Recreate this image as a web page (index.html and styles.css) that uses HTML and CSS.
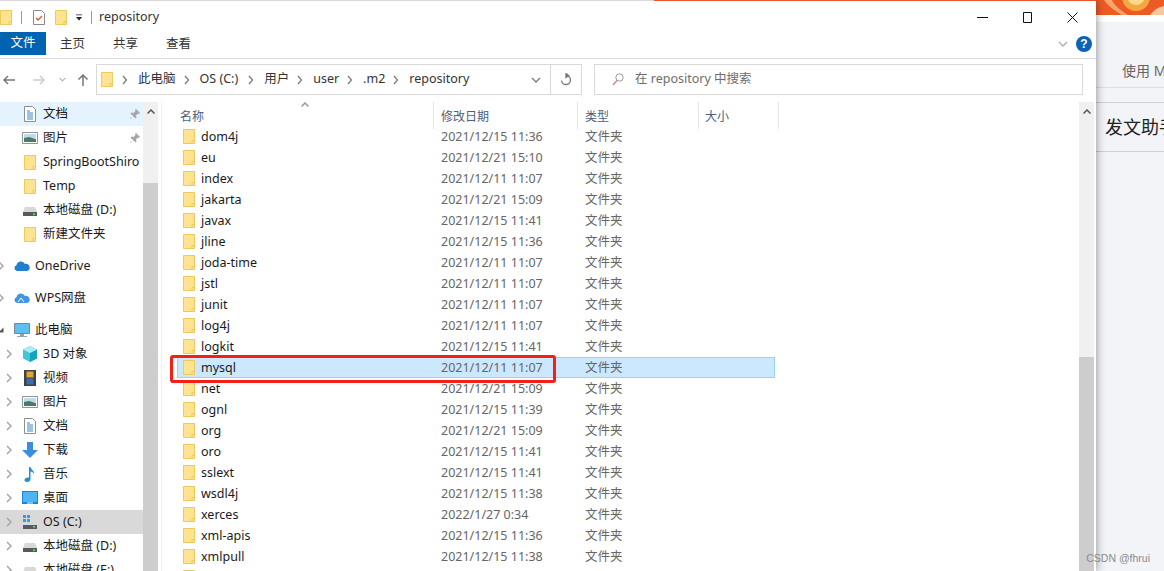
FILE: index.html
```html
<!DOCTYPE html>
<html lang="zh-CN">
<head>
<meta charset="UTF-8">
<title>repository</title>
<link rel="stylesheet" href="styles.css">
</head>
<body>
<svg class="defs" width="0" height="0">
	<symbol id="folder" viewBox="0 0 12 15">
		<path d="M.5.5h11v14H.5z" fill="#ffe391" stroke="#eec95c"/>
		<path d="M9 14.5v-3h2.5" fill="none" stroke="#eec95c"/>
	</symbol>
	<symbol id="doc" viewBox="0 0 16 16">
		<path d="M2.5.5h8l3 3v12h-11z" fill="#fff" stroke="#8a8f94"/>
		<path d="M5 5h3M5 7h6M5 9h6M5 11h6M5 13h6" stroke="#3a84c8"/>
	</symbol>
	<symbol id="pic" viewBox="0 0 16 16">
		<path d="M.5 2.5h15v11H.5z" fill="#fff" stroke="#8f9498"/>
		<path d="M2 4h12v4H2z" fill="#bfdcec"/>
		<path d="M2 8l5-1 7 2v3H2z" fill="#4d7a68"/>
	</symbol>
	<symbol id="drive" viewBox="0 0 16 16">
		<path d="M3 5h10l2 5H1z" fill="#d8d8d8"/>
		<path d="M1 10h14v4H1z" fill="#555b60"/>
		<path d="M11 11.500h2v1.500h-2z" fill="#5fe06c"/>
	</symbol>
	<symbol id="cloud" viewBox="0 0 16 16">
		<path d="M3 13a3 3 0 0 1-.5-5.800A4.500 4.500 0 0 1 11 6a3.500 3.500 0 0 1 2 7z" fill="#1f7fd0"/>
	</symbol>
	<symbol id="wps" viewBox="0 0 16 16">
		<path d="M3 13a3 3 0 0 1-.5-5.800A4.500 4.500 0 0 1 11 6a3.500 3.500 0 0 1 2 7z" fill="#3f95e6"/>
		<path d="M4 12l3-4 3 4" fill="none" stroke="#fff"/>
	</symbol>
	<symbol id="pc" viewBox="0 0 16 16">
		<path d="M.5 1.500h15v10H.5z" fill="#5cc0f0" stroke="#7b8794"/>
		<path d="M6 12h4v2H6zM3 14h10v1H3z" fill="#9aa4ad"/>
	</symbol>
	<symbol id="cube" viewBox="0 0 16 16">
		<path d="M8 0l7 3.500v9L8 16l-7-3.500v-9z" fill="#3fc6d8"/>
		<path d="M8 7l7-3.500v9L8 16z" fill="#17a3bc"/>
		<path d="M8 0l7 3.500L8 7 1 3.500z" fill="#a6ecf2"/>
	</symbol>
	<symbol id="film" viewBox="0 0 16 16">
		<path d="M2 0h12v16H2z" fill="#3e4348"/>
		<path d="M4.500 1.500h7v6h-7z" fill="#e0a52e"/>
		<path d="M4.500 8.500h7v6h-7z" fill="#3d6fb0"/>
	</symbol>
	<symbol id="down" viewBox="0 0 16 16">
		<path d="M5 0h6v8h5l-8 8-8-8h5z" fill="#3a8ee0"/>
	</symbol>
	<symbol id="note" viewBox="0 0 16 16">
		<path d="M7 1h1.500c.5 3 4 3.500 3.500 7-.8-1.500-2-2.200-3.500-2.500V13c0 1.800-1.500 3-3.500 3-1.500 0-2.500-.8-2.500-2s1.500-2.500 3.500-2.500H7z" fill="#1e8fe0"/>
	</symbol>
	<symbol id="desk" viewBox="0 0 16 16">
		<path d="M0 1h16v13H0z" fill="#1188e0"/>
		<path d="M1 2h14v10H1z" fill="#4fb4f2"/>
		<path d="M5 12.500h6v1H5z" fill="#e8f4fc"/>
	</symbol>
	<symbol id="osdrive" viewBox="0 0 16 16">
		<path d="M1 1h3v3H1zM5 1h3v3H5zM1 5h3v3H1zM5 5h3v3H5z" fill="#1ca6ee"/>
		<path d="M3 8h10l2 3H1z" fill="#d8d8d8"/>
		<path d="M1 11h14v4H1z" fill="#555b60"/>
		<path d="M11 12h2v1.500h-2z" fill="#5fe06c"/>
	</symbol>
	<symbol id="pin" viewBox="0 0 10 10">
		<path d="M6 0l4 4-1 1-1-.5-2 2 .5 2-1 1L3 7 .5 10 0 9.500 3 7 .5 4.500l1-1 2 .5 2-2L5 1z" fill="#a4a8ac"/>
	</symbol>
	<symbol id="chev" viewBox="0 0 6 10">
		<path d="M1 1l4 4-4 4" fill="none" stroke="#a6a6a6" stroke-width="1.500"/>
	</symbol>
	<symbol id="sep" viewBox="0 0 6 10">
		<path d="M1 1l3.500 4L1 9" fill="none" stroke="#7c7c7c" stroke-width="1.300"/>
	</symbol>
	<symbol id="vee" viewBox="0 0 10 6">
		<path d="M1 1l4 4 4-4" fill="none" stroke="#7a7a7a" stroke-width="1.300"/>
	</symbol>
	<symbol id="caret" viewBox="0 0 8 5">
		<path d="M.5 4.500L4 1l3.500 3.500" fill="none" stroke="#555" stroke-width="1.500"/>
	</symbol>
</svg>

<section class="window">
	<div class="topLine"></div>

	<header class="titleBar">
		<svg class="titleFolder"><use href="#folder"/></svg>
		<i class="titleSep"></i>
		<svg class="titleCheck" viewBox="0 0 12 15">
			<path d="M.5.5h8l3 3v11H.500z" fill="#fff" stroke="#8a8a8a"/>
			<path d="M3 8l2 2 4-4" fill="none" stroke="#e0562a" stroke-width="1.300"/>
		</svg>
		<svg class="titleFolder2"><use href="#folder"/></svg>
		<svg class="titleDrop" viewBox="0 0 8 7"><path d="M0 0h7v1H0zM0 3h7L3.500 7z" fill="#222"/></svg>
		<i class="titleSep2"></i>
		<span class="titleText">repository</span>
		<div class="winBtns">
			<svg viewBox="0 0 11 11"><path d="M0 5.500h11" stroke="#111"/></svg>
			<svg viewBox="0 0 11 11"><path d="M1.500.5h8v10h-8z" fill="none" stroke="#111"/></svg>
			<svg viewBox="0 0 11 11"><path d="M.5.5l10 10M10.500.5l-10 10" stroke="#111"/></svg>
		</div>
	</header>

	<nav class="ribbon">
		<a class="fileTab">文件</a>
		<a class="tab">主页</a>
		<a class="tab">共享</a>
		<a class="tab">查看</a>
		<svg class="ribbonVee"><use href="#vee"/></svg>
		<span class="help">?</span>
	</nav>

	<div class="addressRow">
		<div class="navBtns">
			<svg viewBox="0 0 12 10"><path d="M12 5H1M5 1L1 5l4 4" fill="none" stroke="#777" stroke-width="1.500"/></svg>
			<svg class="off" viewBox="0 0 12 10"><path d="M0 5h11M7 1l4 4-4 4" fill="none" stroke="#ccc" stroke-width="1.500"/></svg>
			<svg class="small"><use href="#vee"/></svg>
			<svg viewBox="0 0 12 12"><path d="M6 12V1M1.500 5.500L6 1l4.500 4.500" fill="none" stroke="#777" stroke-width="1.500"/></svg>
		</div>
		<div class="address">
			<svg class="crumbFolder"><use href="#folder"/></svg>
			<svg class="crumbSep"><use href="#sep"/></svg><span>此电脑</span>
			<svg class="crumbSep"><use href="#sep"/></svg><span class="crumbDrive">OS (C:)</span>
			<svg class="crumbSep"><use href="#sep"/></svg><span>用户</span>
			<svg class="crumbSep"><use href="#sep"/></svg><span>user</span>
			<svg class="crumbSep"><use href="#sep"/></svg><span>.m2</span>
			<svg class="crumbSep"><use href="#sep"/></svg><span>repository</span>
			<svg class="addressVee"><use href="#vee"/></svg>
			<div class="refresh">
				<svg viewBox="0 0 12 14"><path d="M6 2.500a4.500 4.500 0 1 1-4.500 5M6 .5v4l2.500-2z" fill="none" stroke="#777" stroke-width="1.300"/></svg>
			</div>
		</div>
		<div class="search">
			<svg viewBox="0 0 12 13"><circle cx="7.500" cy="4.500" r="3.700" fill="none" stroke="#999"/><path d="M5 7.500L1 12" stroke="#b08a90" stroke-width="1.200"/></svg>
			<span>在 repository 中搜索</span>
		</div>
	</div>

	<div class="main">
		<aside class="tree">
			<ul class="treeList">
				<li class="quick on"><svg class="ico"><use href="#doc"/></svg><span>文档</span><svg class="pin"><use href="#pin"/></svg></li>
				<li class="quick"><svg class="ico"><use href="#pic"/></svg><span>图片</span><svg class="pin"><use href="#pin"/></svg></li>
				<li class="quick"><svg class="ico fold"><use href="#folder"/></svg><span>SpringBootShiro</span></li>
				<li class="quick"><svg class="ico fold"><use href="#folder"/></svg><span>Temp</span></li>
				<li class="quick"><svg class="ico"><use href="#drive"/></svg><span>本地磁盘 (D:)</span></li>
				<li class="quick groupEnd"><svg class="ico fold"><use href="#folder"/></svg><span>新建文件夹</span></li>
				<li class="root groupEnd"><svg class="arrow"><use href="#chev"/></svg><svg class="ico"><use href="#cloud"/></svg><span>OneDrive</span></li>
				<li class="root groupEnd"><svg class="arrow"><use href="#chev"/></svg><svg class="ico"><use href="#wps"/></svg><span>WPS网盘</span></li>
				<li class="root"><svg class="arrow open" viewBox="0 0 6 6"><path d="M5.500.5v5h-5z" fill="#555"/></svg><svg class="ico"><use href="#pc"/></svg><span>此电脑</span></li>
				<li class="child"><svg class="arrow"><use href="#chev"/></svg><svg class="ico"><use href="#cube"/></svg><span>3D 对象</span></li>
				<li class="child"><svg class="arrow"><use href="#chev"/></svg><svg class="ico"><use href="#film"/></svg><span>视频</span></li>
				<li class="child"><svg class="arrow"><use href="#chev"/></svg><svg class="ico"><use href="#pic"/></svg><span>图片</span></li>
				<li class="child"><svg class="arrow"><use href="#chev"/></svg><svg class="ico"><use href="#doc"/></svg><span>文档</span></li>
				<li class="child"><svg class="arrow"><use href="#chev"/></svg><svg class="ico"><use href="#down"/></svg><span>下载</span></li>
				<li class="child"><svg class="arrow"><use href="#chev"/></svg><svg class="ico"><use href="#note"/></svg><span>音乐</span></li>
				<li class="child"><svg class="arrow"><use href="#chev"/></svg><svg class="ico"><use href="#desk"/></svg><span>桌面</span></li>
				<li class="child cur"><svg class="arrow"><use href="#chev"/></svg><svg class="ico"><use href="#osdrive"/></svg><span>OS (C:)</span></li>
				<li class="child"><svg class="arrow"><use href="#chev"/></svg><svg class="ico"><use href="#drive"/></svg><span>本地磁盘 (D:)</span></li>
				<li class="child"><svg class="arrow"><use href="#chev"/></svg><svg class="ico"><use href="#drive"/></svg><span>本地磁盘 (E:)</span></li>
			</ul>
			<div class="scroll treeScroll"><svg class="up"><use href="#caret"/></svg><div class="thumb"></div></div>
		</aside>

		<div class="files">
			<div class="head">
				<span class="colName">名称<svg class="sort"><use href="#caret"/></svg></span>
				<span class="colDate">修改日期</span>
				<span class="colType">类型</span>
				<span class="colSize">大小</span>
			</div>
			<ul class="rows">
				<li><span class="colName"><svg><use href="#folder"/></svg>dom4j</span><span class="colDate">2021/12/15 11:36</span><span class="colType">文件夹</span></li>
				<li><span class="colName"><svg><use href="#folder"/></svg>eu</span><span class="colDate">2021/12/21 15:10</span><span class="colType">文件夹</span></li>
				<li><span class="colName"><svg><use href="#folder"/></svg>index</span><span class="colDate">2021/12/11 11:07</span><span class="colType">文件夹</span></li>
				<li><span class="colName"><svg><use href="#folder"/></svg>jakarta</span><span class="colDate">2021/12/21 15:09</span><span class="colType">文件夹</span></li>
				<li><span class="colName"><svg><use href="#folder"/></svg>javax</span><span class="colDate">2021/12/15 11:41</span><span class="colType">文件夹</span></li>
				<li><span class="colName"><svg><use href="#folder"/></svg>jline</span><span class="colDate">2021/12/15 11:36</span><span class="colType">文件夹</span></li>
				<li><span class="colName"><svg><use href="#folder"/></svg>joda-time</span><span class="colDate">2021/12/11 11:07</span><span class="colType">文件夹</span></li>
				<li><span class="colName"><svg><use href="#folder"/></svg>jstl</span><span class="colDate">2021/12/11 11:07</span><span class="colType">文件夹</span></li>
				<li><span class="colName"><svg><use href="#folder"/></svg>junit</span><span class="colDate">2021/12/11 11:07</span><span class="colType">文件夹</span></li>
				<li><span class="colName"><svg><use href="#folder"/></svg>log4j</span><span class="colDate">2021/12/11 11:07</span><span class="colType">文件夹</span></li>
				<li><span class="colName"><svg><use href="#folder"/></svg>logkit</span><span class="colDate">2021/12/15 11:41</span><span class="colType">文件夹</span></li>
				<li class="selected"><span class="colName"><svg><use href="#folder"/></svg>mysql</span><span class="colDate">2021/12/11 11:07</span><span class="colType">文件夹</span></li>
				<li><span class="colName"><svg><use href="#folder"/></svg>net</span><span class="colDate">2021/12/21 15:09</span><span class="colType">文件夹</span></li>
				<li><span class="colName"><svg><use href="#folder"/></svg>ognl</span><span class="colDate">2021/12/15 11:39</span><span class="colType">文件夹</span></li>
				<li><span class="colName"><svg><use href="#folder"/></svg>org</span><span class="colDate">2021/12/21 15:09</span><span class="colType">文件夹</span></li>
				<li><span class="colName"><svg><use href="#folder"/></svg>oro</span><span class="colDate">2021/12/15 11:41</span><span class="colType">文件夹</span></li>
				<li><span class="colName"><svg><use href="#folder"/></svg>sslext</span><span class="colDate">2021/12/15 11:41</span><span class="colType">文件夹</span></li>
				<li><span class="colName"><svg><use href="#folder"/></svg>wsdl4j</span><span class="colDate">2021/12/15 11:38</span><span class="colType">文件夹</span></li>
				<li><span class="colName"><svg><use href="#folder"/></svg>xerces</span><span class="colDate">2022/1/27 0:34</span><span class="colType">文件夹</span></li>
				<li><span class="colName"><svg><use href="#folder"/></svg>xml-apis</span><span class="colDate">2021/12/15 11:36</span><span class="colType">文件夹</span></li>
				<li><span class="colName"><svg><use href="#folder"/></svg>xmlpull</span><span class="colDate">2021/12/15 11:38</span><span class="colType">文件夹</span></li>
				<li><span class="colName"><svg><use href="#folder"/></svg></span></li>
			</ul>
			<div class="redBox"></div>
		</div>

		<div class="scroll fileScroll"><svg class="up"><use href="#caret"/></svg><div class="thumb"></div></div>
	</div>
</section>

<aside class="side">
	<div class="banner">
		<svg viewBox="0 0 68 15" preserveAspectRatio="none">
			<path d="M0 0h68v15H0z" fill="#ee5a24"/>
			<path d="M8 0c4 6 10 10 18 15h6C24 10 18 5 16 0z" fill="#f7a56a"/>
			<circle cx="40" cy="-3" r="14" fill="#f5a742"/>
			<circle cx="40" cy="-4" r="9" fill="#fcd98c"/>
			<path d="M54 15c4-5 8-8 14-9v9z" fill="#f9c79a"/>
		</svg>
	</div>
	<div class="useRow">使用 M</div>
	<div class="helper">发文助手</div>
</aside>

<div class="mark">CSDN @fhrui</div>
</body>
</html>
```

FILE: styles.css
```css
* {
	box-sizing: border-box;
}
html,
body {
	height: 100%;
}
body {
	display: flex;
	position: relative;
	margin: 0;
	height: 571px;
	overflow: hidden;
	background: #f3f4f7;
	color: #1a1a1a;
	font: 12.5px/1 "Noto Sans", "Noto Sans CJK SC", sans-serif;
}
ul {
	margin: 0;
	padding: 0;
	list-style: none;
}
svg {
	display: block;
	flex: none;
}
.defs {
	position: absolute;
}

.window {
	position: relative;
	z-index: 1;
	display: flex;
	flex-direction: column;
	flex: none;
	width: 1096px;
	height: 571px;
	background: #fff;
	box-shadow: 0 0 9px rgba(0, 0, 0, .45);
}
.topLine {
	flex: none;
	height: 1px;
	background: linear-gradient(to right, #d9d9d9 654px, #e9552a 654px);
}

/* title bar */
.titleBar {
	display: flex;
	flex: none;
	align-items: center;
	height: 32px;
}
.titleFolder,
.titleFolder2 {
	width: 12px;
	height: 15px;
}
.titleSep,
.titleSep2 {
	width: 1px;
	height: 13px;
	margin-left: 9px;
	background: #9a9a9a;
}
.titleCheck {
	width: 12px;
	height: 15px;
	margin-left: 11px;
}
.titleFolder2 {
	margin-left: 10px;
}
.titleDrop {
	width: 7px;
	height: 7px;
	margin-left: 9px;
}
.titleSep2 {
	margin-left: 8px;
}
.titleText {
	margin-left: 7px;
	font-size: 12.5px;
	color: #333;
}
.winBtns {
	display: flex;
	gap: 34px;
	margin-left: auto;
	margin-right: 18px;
}
.winBtns svg {
	width: 11px;
	height: 11px;
}

/* ribbon */
.ribbon {
	display: flex;
	flex: none;
	align-items: center;
	height: 27px;
	margin-top: -1px;
	padding-bottom: 3px;
	border-bottom: 1px solid #dadada;
	white-space: nowrap;
}
.fileTab {
	display: flex;
	align-items: center;
	justify-content: center;
	flex: none;
	width: 46px;
	height: 23px;
	background: #0063b1;
	color: #fff;
}
.tab {
	flex: none;
	width: 24px;
	margin-left: 29px;
	padding-top: 2px;
	color: #333;
}
.fileTab + .tab {
	margin-left: 14px;
}
.ribbonVee {
	width: 10px;
	height: 6px;
	margin-left: auto;
	opacity: .6;
}
.help {
	width: 16px;
	height: 16px;
	margin: 0 4px 0 8px;
	border-radius: 50%;
	background: #0e62b4;
	color: #fff;
	font: bold 12px/16px "Liberation Sans", sans-serif;
	text-align: center;
}

/* address row */
.addressRow {
	display: flex;
	flex: none;
	align-items: center;
	height: 43px;
	padding-right: 13px;
	padding-bottom: 2px;
}
.navBtns {
	display: flex;
	align-items: center;
	width: 96px;
	padding-left: 3px;
}
.navBtns svg {
	width: 12px;
	height: 12px;
	margin-right: 18px;
}
.navBtns .small {
	width: 7px;
	height: 5px;
	margin: 0 11px 0 -4px;
}
.address {
	display: flex;
	align-items: center;
	width: 486px;
	height: 31px;
	padding-left: 4px;
	border: 1px solid #d9d9d9;
	color: #333;
}
.crumbFolder {
	width: 12px;
	height: 15px;
	margin-right: 3px;
}
.crumbSep {
	width: 6px;
	height: 10px;
	margin: 0 10px 0 6px;
}
.address span + .crumbSep {
	margin-left: 8px;
}
.crumbDrive {
	padding-right: 2px;
}
.addressVee {
	width: 10px;
	height: 6px;
	margin-left: auto;
}
.refresh {
	display: flex;
	align-items: center;
	justify-content: center;
	width: 31px;
	height: 100%;
	margin-left: 9px;
	border-left: 1px solid #d9d9d9;
}
.refresh svg {
	width: 12px;
	height: 14px;
}
.search {
	display: flex;
	align-items: center;
	flex: 1;
	height: 31px;
	margin-left: 12px;
	padding-left: 17px;
	border: 1px solid #d9d9d9;
	color: #6d6d6d;
}
.search svg {
	width: 12px;
	height: 13px;
	margin-right: 11px;
}

/* main */
.main {
	display: flex;
	flex: 1;
	min-height: 0;
}
.tree {
	display: flex;
	flex: none;
	width: 162px;
	border-right: 1px solid #f0f0f0;
}
.treeList {
	flex: none;
	width: 143px;
	overflow: hidden;
	color: #1a1a1a;
}
.treeList li {
	display: flex;
	align-items: center;
	height: 24px;
	white-space: nowrap;
}
.treeList .ico {
	width: 16px;
	height: 16px;
	margin-right: 5px;
}
.treeList .fold {
	width: 12px;
	height: 15px;
	margin-left: 2px;
	margin-right: 7px;
}
.treeList .on {
	background: #e5f3ff;
}
.treeList .cur {
	background: #d9d9d9;
}
.quick {
	padding-left: 22px;
}
.treeList .groupEnd {
	margin-bottom: 8px;
}
.root {
	margin-left: -2px;
}
.child {
	padding-left: 6px;
}
.arrow {
	width: 6px;
	height: 10px;
	margin-right: 10px;
}
.arrow.open {
	height: 6px;
}
.pin {
	width: 10px;
	height: 10px;
	margin-left: auto;
	margin-right: 3px;
}

.scroll {
	display: flex;
	flex-direction: column;
	flex: none;
	width: 15px;
	background: #f0f0f0;
}
.up {
	width: 8px;
	height: 5px;
	margin: 7px auto 0;
}
.thumb {
	flex: 1;
	background: #cdcdcd;
}
.treeScroll .thumb {
	margin-top: 69px;
}
.fileScroll {
	margin-right: 2px;
}
.fileScroll .thumb {
	margin-top: 243px;
}

/* file list */
.files {
	position: relative;
	flex: 1;
	min-width: 0;
	padding-left: 15px;
	overflow: hidden;
	color: #666;
}
.head,
.rows li {
	display: flex;
	align-items: center;
	width: 598px;
}
.head {
	width: 602px;
	height: 24px;
	font-size: 12px;
}
.colName {
	display: flex;
	align-items: center;
	position: relative;
	flex: none;
	width: 257px;
	padding-left: 6px;
}
.colDate {
	flex: none;
	width: 144px;
	padding-left: 7px;
}
.colType {
	flex: none;
	width: 121px;
	padding-left: 7px;
}
.colSize {
	flex: none;
	width: 80px;
	padding-left: 6px;
}
.head span {
	display: flex;
	align-items: center;
	position: relative;
	height: 27px;
	margin-top: 3px;
	padding-top: 2px;
	border-right: 1px solid #e5e5e5;
	color: #4c607a;
}
.head .colName {
	padding-left: 3px;
}
.sort {
	position: absolute;
	top: 0;
	left: 124px;
	width: 8px;
	height: 5px;
	opacity: .6;
}
.rows {
	color: #666;
}
.rows li {
	height: 21px;
	white-space: nowrap;
}
.rows li span {
	padding-top: 2px;
}
.rows .colName {
	color: #1a1a1a;
}
.rows .colName svg {
	width: 12px;
	height: 15px;
	margin: -2px 6px 0 0;
}
.rows .selected {
	background: #cce8ff;
	outline: 1px solid #99d1ff;
	outline-offset: -1px;
}
.redBox {
	position: absolute;
	top: 253px;
	left: 8px;
	width: 386px;
	height: 28px;
	border: 3px solid #f51f14;
	border-radius: 3px;
}

/* page behind the window */
.side {
	flex: 1;
	min-width: 0;
	overflow: hidden;
	white-space: nowrap;
}
.banner svg {
	width: 100%;
	height: 15px;
}
.banner {
	height: 22px;
	background: #fff;
}
.useRow {
	height: 66px;
	padding: 42px 0 0 26px;
	border-bottom: 1px solid #dddee0;
	color: #666;
	font-size: 14px;
}
.helper {
	height: 50px;
	margin-top: 14px;
	padding: 15px 0 0 9px;
	border-top: 1px solid #cfd0d3;
	border-bottom: 1px solid #cfd0d3;
	font-size: 18px;
	color: #222;
}
.mark {
	position: absolute;
	z-index: 2;
	right: 14px;
	bottom: 8px;
	color: #8a8a8a;
	font: 10.5px/1 "Liberation Sans", sans-serif;
}
```
